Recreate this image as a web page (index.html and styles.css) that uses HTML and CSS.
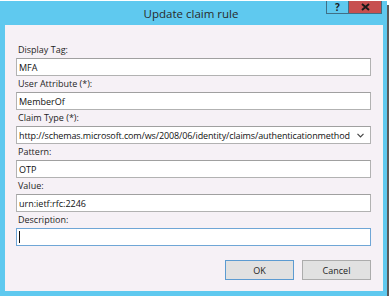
FILE: index.html
```html
<!DOCTYPE html>
<html lang="en">
<head>
<meta charset="utf-8"/>
<title>Update claim rule</title>
<link rel="stylesheet" href="styles.css">
</head>
<body>
<div class="window">
  <div class="titlebar">
    <span class="title">Update claim rule</span>
    <div class="controls">
      <span class="ctl help">?</span>
      <span class="ctl close">
        <svg width="9" height="8" viewBox="0 0 9 8"><path d="M1 1 L8 7 M8 1 L1 7" stroke="#1a1a1a" stroke-width="2"/></svg>
      </span>
    </div>
  </div>
  <div class="client">
    <label class="lbl">Display Tag:</label>
    <div class="field">MFA</div>
    <label class="lbl">User Attribute (*):</label>
    <div class="field">MemberOf</div>
    <label class="lbl">Claim Type (*):</label>
    <div class="field combo">
      <span class="combo-text">http://schemas.microsoft.com/ws/2008/06/identity/claims/authenticationmethod</span>
      <svg width="7" height="5" viewBox="0 0 7 5"><path d="M0.5 0.8 L3.5 3.8 L6.5 0.8" fill="none" stroke="#444" stroke-width="1.2"/></svg>
    </div>
    <label class="lbl">Pattern:</label>
    <div class="field">OTP</div>
    <label class="lbl">Value:</label>
    <div class="field">urn:ietf:rfc:2246</div>
    <label class="lbl">Description:</label>
    <div class="field focus"><span class="caret"></span></div>
    <div class="buttons">
      <button class="btn default">OK</button>
      <button class="btn">Cancel</button>
    </div>
  </div>
</div>
</body>
</html>
```

FILE: styles.css
```css
* {
    box-sizing: border-box;
    margin: 0;
    padding: 0;
}
body {
    background: #fff;
    font-family: 'Open Sans', 'Noto Sans', sans-serif;
    font-size: 9px;
    color: #1e1e1e;
}
.window {
    margin-top: 1px;
    width: 387px;
    height: 295px;
    background: #5fc9ef;
    padding: 0 4px 5px 5px;
    box-shadow: 2px 4px 0 #5a5a5a;
    display: flex;
    flex-direction: column;
    position: relative;
}
.titlebar {
    height: 25px;
    display: flex;
    align-items: center;
    justify-content: center;
    padding-right: 6px;
}
.title {
    font-size: 11.5px;
    color: #2a2a2a;
}
.controls {
    position: absolute;
    top: 0;
    right: 5px;
    display: flex;
}
.ctl {
    height: 13px;
    display: flex;
    align-items: center;
    justify-content: center;
    border: 1px solid #3f6f86;
    border-top: none;
}
.help {
    width: 22px;
    font-weight: bold;
    font-size: 10px;
    color: #1a1a1a;
    border-right: none;
}
.close {
    width: 34px;
    background: #c75050;
}
.client {
    flex: 1;
    background: #f6f1f6;
    padding: 17px 11px 11px 11px;
    display: flex;
    flex-direction: column;
}
.lbl {
    line-height: 16px;
    height: 16px;
    padding-left: 2px;
}
.field {
    height: 18px;
    width: 355px;
    background: #fff;
    border: 1px solid #b2b2b2;
    border-top-color: #a0a0a0;
    padding-left: 2px;
    display: flex;
    align-items: center;
    color: #111;
}
.combo {
    justify-content: space-between;
    padding-right: 6px;
    white-space: nowrap;
}
.combo-text {
    letter-spacing: -0.12px;
}
.focus {
    border-color: #6fa6d6;
}
.caret {
    width: 1px;
    height: 12px;
    background: #111;
}
.buttons {
    margin-top: 14px;
    display: flex;
    justify-content: flex-end;
    gap: 8px;
    padding-right: 1px;
}
.btn {
    width: 69px;
    height: 20px;
    background: #e1e1e1;
    border: 1px solid #acacac;
    font-family: inherit;
    font-size: 9px;
    color: #1e1e1e;
}
.btn.default {
    border-color: #5c9bd1;
}
```
